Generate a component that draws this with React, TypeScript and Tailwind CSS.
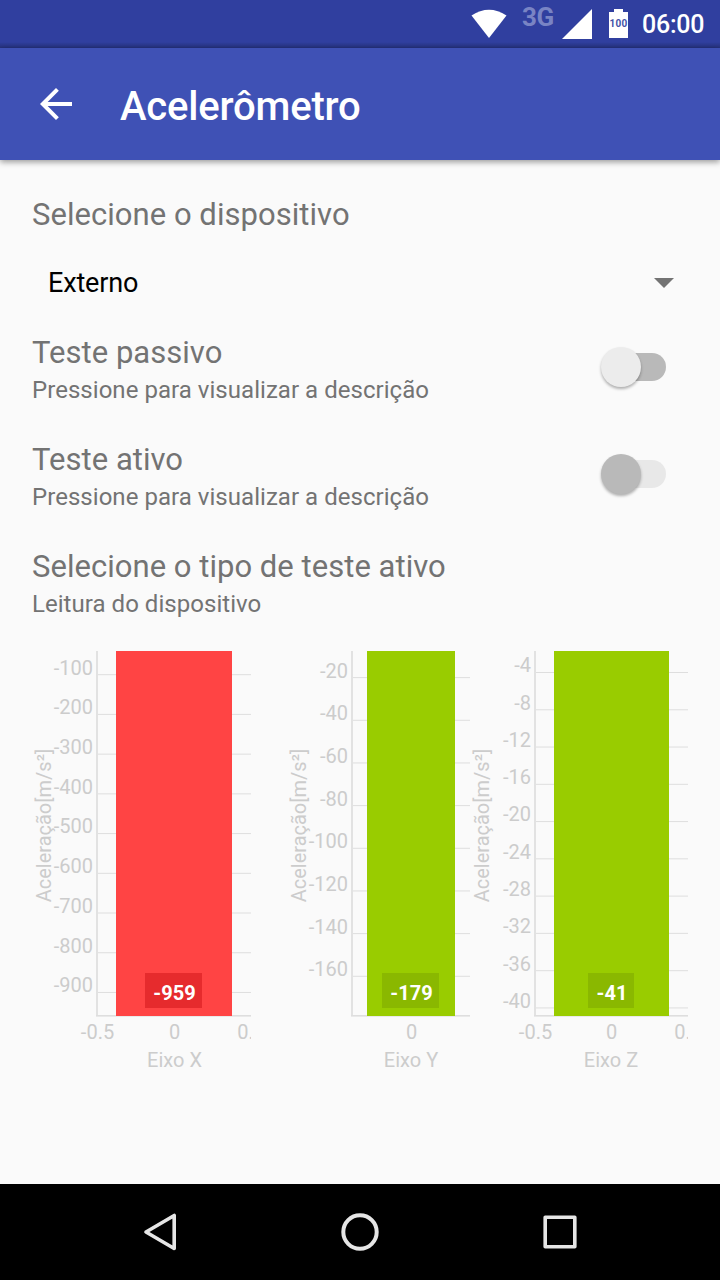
import React from "react";

type ChartProps = {
  left: number;
  width: number;
  axisX: number;
  bar: [number, number];
  color: string;
  badge: [number, number];
  badgeColor: string;
  value: string;
  name: string;
  titleX: number;
  ticks: string[];
  firstTick: number;
  step: number;
  xTicks: { x: number; label: string }[];
  centerX: number;
};

function AxisChart(p: ChartProps) {
  return (
    <svg
      className="block h-[440px] shrink-0 overflow-hidden"
      width={p.width}
      height={440}
      viewBox={`${p.left} 640 ${p.width} 440`}
      fontFamily="Roboto, sans-serif"
      fontSize={20}
      fill="#cccccc"
    >
      {p.ticks.map((t, i) => {
        const y = p.firstTick + i * p.step;
        return (
          <g key={t}>
            <line x1={p.axisX} x2={p.left + p.width} y1={y} y2={y} stroke="#dedede" strokeWidth={1} />
            <text x={p.axisX - 4} y={Math.floor(y + 0.4)} textAnchor="end">
              {t}
            </text>
          </g>
        );
      })}
      <rect x={p.axisX - 1} y={651} width={2} height={365} fill="#e2e2e2" />
      <rect x={p.axisX - 1} y={1015} width={p.left + p.width - p.axisX + 1} height={1.6} fill="#dedede" />
      <rect x={p.bar[0]} y={651} width={p.bar[1] - p.bar[0]} height={365} fill={p.color} />
      <rect x={p.badge[0]} y={973} width={p.badge[1] - p.badge[0]} height={35} fill={p.badgeColor} />
      <text x={(p.badge[0] + p.badge[1]) / 2 + 1} y={1000} textAnchor="middle" fontWeight={700} fill="#ffffff">
        {p.value}
      </text>
      {p.xTicks.map((t) => (
        <text key={t.label} x={t.x} y={1039} textAnchor="middle">
          {t.label}
        </text>
      ))}
      <text x={p.centerX} y={1067} textAnchor="middle">
        {p.name}
      </text>
      <text transform={`translate(${p.titleX} 825.5) rotate(-90)`} textAnchor="middle">
        Aceleração[m/s²]
      </text>
    </svg>
  );
}

const charts: ChartProps[] = [
  {
    left: 32, width: 219, axisX: 97, bar: [116, 232], color: "#ff4444",
    badge: [145, 202], badgeColor: "#e62b2d", value: "-959", name: "Eixo X", titleX: 51,
    ticks: ["-100", "-200", "-300", "-400", "-500", "-600", "-700", "-800", "-900"],
    firstTick: 674.7, step: 39.72, centerX: 174.5,
    xTicks: [{ x: 97.5, label: "-0.5" }, { x: 174.5, label: "0" }, { x: 251.2, label: "0.5" }],
  },
  {
    left: 251, width: 219, axisX: 352, bar: [367, 455], color: "#99cc00",
    badge: [382, 439], badgeColor: "#8ab800", value: "-179", name: "Eixo Y", titleX: 306,
    ticks: ["-20", "-40", "-60", "-80", "-100", "-120", "-140", "-160"],
    firstTick: 677.6, step: 42.67, centerX: 411,
    xTicks: [{ x: 411.5, label: "0" }],
  },
  {
    left: 470, width: 218, axisX: 535, bar: [554, 669], color: "#99cc00",
    badge: [588, 634], badgeColor: "#8ab800", value: "-41", name: "Eixo Z", titleX: 489,
    ticks: ["-4", "-8", "-12", "-16", "-20", "-24", "-28", "-32", "-36", "-40"],
    firstTick: 672.5, step: 37.27, centerX: 611,
    xTicks: [{ x: 535.5, label: "-0.5" }, { x: 611.5, label: "0" }, { x: 688.2, label: "0.5" }],
  },
];

function Toggle({ disabled = false }: { disabled?: boolean }) {
  return (
    <div className={`mt-[5px] mr-[54px] flex h-7 w-16 items-center rounded-full ${disabled ? "bg-[#e8e8e8]" : "bg-[#b9b9b9]"}`}>
      <div
        className={`-ml-px size-10 shrink-0 rounded-full shadow-[0_2px_3px_rgba(0,0,0,0.3)] ${disabled ? "bg-[#b9b9b9]" : "bg-[#ececec]"}`}
      />
    </div>
  );
}

function Row({ title, sub, children }: { title: string; sub: string; children?: React.ReactNode }) {
  return (
    <div className="flex h-[107px] items-start justify-between">
      <div className="flex flex-col">
        <div className="h-[38px] text-[31px] leading-[38px] tracking-[0.03px]">{title}</div>
        <div className="h-9 text-[24px] leading-9 tracking-[0.04px]">{sub}</div>
      </div>
      {children}
    </div>
  );
}

export default function App() {
  return (
    <div className="flex h-[1280px] w-[720px] flex-col bg-[#fafafa] font-[Roboto,sans-serif] text-[#737373]">
      <div className="flex h-12 shrink-0 items-start bg-[#303f9f] bg-[linear-gradient(to_bottom,transparent_42px,rgba(0,0,0,0.22)_48px)] text-white">
        <svg className="ml-[471px] block h-12 w-9" viewBox="471 0 36 48">
          <path d="M471.5 15.5Q489 4 506.5 15.5L489 38Z" fill="#fff" />
        </svg>
        <div className="ml-[15px] w-10 pt-[2px] text-[26px] leading-[31px] font-bold tracking-[-0.3px] text-[#7984c4]">3G</div>
        <svg className="block h-12 w-[30px]" viewBox="562 0 30 48">
          <path d="M562 39L592 9V39Z" fill="#fff" />
        </svg>
        <svg className="ml-4 block h-12 w-5" viewBox="608 0 20 48">
          <path d="M609 12H614V9H623V12H628V38H609Z" fill="#fff" />
          <text x="618.6" y="27" textAnchor="middle" fontFamily="Roboto, sans-serif" fontSize="10" letterSpacing="0.3" fontWeight="700" fill="#4453a8">
            100
          </text>
        </svg>
        <div className="ml-[14px] pt-[1px] text-[25px] leading-[48px] font-medium tracking-[-0.25px]">06:00</div>
      </div>
      <div className="z-10 flex h-28 shrink-0 items-center bg-[#3f51b5] text-white shadow-[0_2px_6px_rgba(0,0,0,0.4)]">
        <svg className="ml-8 block size-12" viewBox="0 0 24 24">
          <path d="M20 11H7.83l5.59-5.59L12 4l-8 8 8 8 1.41-1.41L7.83 13H20v-2z" fill="#fff" />
        </svg>
        <h1 className="ml-10 pt-[6px] text-[40px] leading-[48px] font-medium tracking-[-0.18px]">Acelerômetro</h1>
      </div>
      <main className="flex h-[1024px] shrink-0 flex-col pl-8">
        <div className="mt-9 h-[38px] text-[31px] leading-[38px] tracking-[0.04px]">Selecione o dispositivo</div>
        <div className="mt-[25px] flex h-12 items-center justify-between pr-[46px] pl-4 text-[27px] tracking-[-0.15px] text-black">
          <span>Externo</span>
          <svg className="block h-[10px] w-5" viewBox="0 0 20 10">
            <path d="M0 0H20L10 10Z" fill="#737373" />
          </svg>
        </div>
        <div className="mt-[27px] flex flex-col">
          <Row title="Teste passivo" sub="Pressione para visualizar a descrição">
            <div className="pt-[14px]"><Toggle /></div>
          </Row>
          <Row title="Teste ativo" sub="Pressione para visualizar a descrição">
            <div className="pt-[14px]"><Toggle disabled /></div>
          </Row>
          <Row title="Selecione o tipo de teste ativo" sub="Leitura do dispositivo" />
        </div>
        <div className="-mt-[15px] flex">
          {charts.map((c) => (
            <AxisChart key={c.name} {...c} />
          ))}
        </div>
      </main>
      <nav className="flex h-24 shrink-0 items-center justify-center gap-[152px] bg-black">
        <svg className="block size-12" viewBox="0 0 48 48" fill="none" stroke="#e6e6e6" strokeWidth="3.6" strokeLinejoin="round">
          <path d="M38.2 7.5V40.5L10 24Z" />
        </svg>
        <svg className="block size-12" viewBox="0 0 48 48" fill="none" stroke="#e6e6e6" strokeWidth="4">
          <circle cx="24" cy="24" r="16.7" />
        </svg>
        <svg className="block size-12" viewBox="0 0 48 48" fill="none" stroke="#e6e6e6" strokeWidth="3.6" strokeLinejoin="round">
          <rect x="9.2" y="9.2" width="29.6" height="29.6" />
        </svg>
      </nav>
    </div>
  );
}
